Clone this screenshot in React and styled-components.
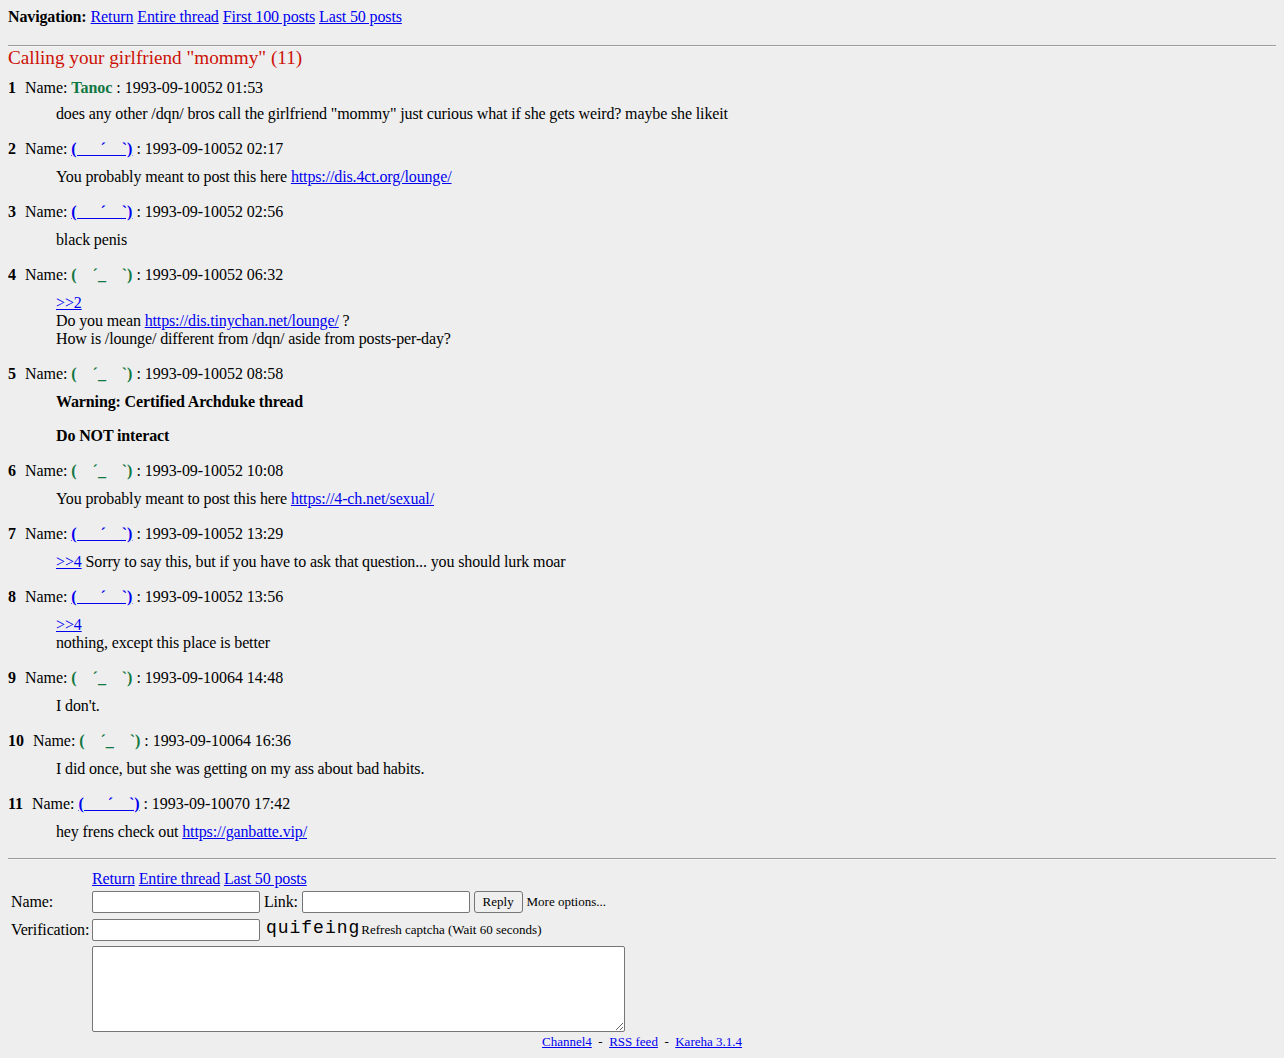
import React from "react";
import styled, { createGlobalStyle } from "styled-components";

const GlobalStyle = createGlobalStyle`
  body {
    margin: 8px;
    background: #eeeeee;
    color: #000;
    font-family: "Liberation Serif", "Times New Roman", serif;
    font-size: 16px;
    letter-spacing: -0.13px;
  }
  a {
    color: #0000ee;
  }
`;

const GREEN_FACE = "(\u2003´_\u2003`)";
const BLUE_FACE = "(\u2003\u2002´\u2003`)";

const NavBar = styled.div`
  line-height: 18px;
  a {
    margin-left: 4px;
  }
`;

const NavLabel = styled.b`
  font-weight: bold;
`;

const Rule = styled.hr`
  border: 0;
  border-top: 1px solid #9c9c9c;
  border-bottom: 1px solid #f6f6f6;
  height: 0;
  margin: ${(p) => p.$top}px 0 ${(p) => p.$bottom}px;
`;

const Title = styled.h2`
  margin: 0;
  font-size: 19.2px;
  line-height: 22px;
  font-weight: normal;
  letter-spacing: 0;
  color: #cc1105;
`;

const PostList = styled.div`
  margin-top: 10px;
`;

const Post = styled.div`
  line-height: 18px;
`;

const PostHead = styled.div`
  height: 18px;
  line-height: 18px;
  letter-spacing: -0.04px;
`;

const ReplyNum = styled.b`
  margin-right: 5px;
`;

const PosterName = styled.b`
  color: #117743;
`;

const PosterLink = styled.a`
  font-weight: bold;
  color: #0000ee;
`;

const PostBody = styled.div`
  margin: ${(p) => (p.$first ? 8 : 10)}px 0 17px 48px;
  line-height: 18px;
`;

const Para = styled.p`
  margin: 0;
  & + & {
    margin-top: 16px;
  }
`;

const FormGrid = styled.div`
  display: grid;
  grid-template-columns: 84px auto;
  grid-template-rows: 17px 24px 23px auto;
  row-gap: 4px;
  align-items: start;
`;

const Label = styled.div`
  padding-left: 3px;
  line-height: 22px;
`;

const Cell = styled.div`
  line-height: 22px;
  white-space: nowrap;
`;

const LinksCell = styled.div`
  grid-column: 2;
  line-height: 18px;
`;

const Field = styled.input`
  box-sizing: border-box;
  width: 168px;
  height: 22px;
  border: 1px solid #767676;
  border-radius: 2px;
  background: #fff;
  vertical-align: top;
  padding: 1px 2px;
  font-size: 13px;
`;

const InlineText = styled.span`
  display: inline-block;
  vertical-align: top;
  line-height: 22px;
`;

const ReplyButton = styled.button`
  box-sizing: border-box;
  height: 22px;
  width: 49px;
  padding: 0;
  font-family: "Liberation Serif", "Times New Roman", serif;
  font-size: 13px;
  color: #000;
  background: #efefef;
  border: 1px solid #767676;
  border-radius: 3px;
  vertical-align: top;
`;

const SmallText = styled.span`
  font-size: 13px;
  vertical-align: top;
  line-height: 22px;
  letter-spacing: 0;
`;

const Captcha = styled.span`
  display: inline-block;
  vertical-align: top;
  font-family: "Liberation Mono", "DejaVu Sans Mono", monospace;
  font-size: 18px;
  letter-spacing: 1px;
  line-height: 18px;
  margin: 0 1px 0 2px;
`;

const Comment = styled.textarea`
  display: block;
  box-sizing: border-box;
  width: 533px;
  height: 86px;
  border: 1px solid #767676;
  border-radius: 2px;
  background: #fff;
`;

const Footer = styled.div`
  margin-top: 2px;
  text-align: center;
  font-size: 13px;
  line-height: 15px;
  letter-spacing: 0;
  white-space: pre;
`;

const posts = [
  {
    num: 1,
    name: "Tanoc",
    date: "1993-09-10052 01:53",
    body: (
      <Para>
        does any other /dqn/ bros call the girlfriend "mommy" just curious what if she gets weird? maybe she likeit
      </Para>
    ),
  },
  {
    num: 2,
    name: BLUE_FACE,
    link: true,
    date: "1993-09-10052 02:17",
    body: (
      <Para>
        You probably meant to post this here <a href="#">https://dis.4ct.org/lounge/</a>
      </Para>
    ),
  },
  { num: 3, name: BLUE_FACE, link: true, date: "1993-09-10052 02:56", body: <Para>black penis</Para> },
  {
    num: 4,
    name: GREEN_FACE,
    date: "1993-09-10052 06:32",
    body: (
      <Para>
        <a href="#">&gt;&gt;2</a>
        <br />
        Do you mean <a href="#">https://dis.tinychan.net/lounge/</a> ?
        <br />
        How is /lounge/ different from /dqn/ aside from posts-per-day?
      </Para>
    ),
  },
  {
    num: 5,
    name: GREEN_FACE,
    date: "1993-09-10052 08:58",
    body: (
      <>
        <Para>
          <b>Warning: Certified Archduke thread</b>
        </Para>
        <Para>
          <b>Do NOT interact</b>
        </Para>
      </>
    ),
  },
  {
    num: 6,
    name: GREEN_FACE,
    date: "1993-09-10052 10:08",
    body: (
      <Para>
        You probably meant to post this here <a href="#">https://4-ch.net/sexual/</a>
      </Para>
    ),
  },
  {
    num: 7,
    name: BLUE_FACE,
    link: true,
    date: "1993-09-10052 13:29",
    body: (
      <Para>
        <a href="#">&gt;&gt;4</a> Sorry to say this, but if you have to ask that question... you should lurk moar
      </Para>
    ),
  },
  {
    num: 8,
    name: BLUE_FACE,
    link: true,
    date: "1993-09-10052 13:56",
    body: (
      <Para>
        <a href="#">&gt;&gt;4</a>
        <br />
        nothing, except this place is better
      </Para>
    ),
  },
  { num: 9, name: GREEN_FACE, date: "1993-09-10064 14:48", body: <Para>I don't.</Para> },
  {
    num: 10,
    name: GREEN_FACE,
    date: "1993-09-10064 16:36",
    body: <Para>I did once, but she was getting on my ass about bad habits.</Para>,
  },
  {
    num: 11,
    name: BLUE_FACE,
    link: true,
    date: "1993-09-10070 17:42",
    body: (
      <Para>
        hey frens check out <a href="#">https://ganbatte.vip/</a>
      </Para>
    ),
  },
];

const App = () => {
  return (
    <>
      <GlobalStyle />
      <NavBar>
        <NavLabel>Navigation:</NavLabel>
        <a href="#">Return</a>
        <a href="#">Entire thread</a>
        <a href="#">First 100 posts</a>
        <a href="#">Last 50 posts</a>
      </NavBar>
      <Rule $top={19} $bottom={0} />
      <Title>Calling your girlfriend "mommy" (11)</Title>

      <PostList>
        {posts.map((post) => (
          <Post key={post.num}>
            <PostHead>
              <ReplyNum>{post.num}</ReplyNum> Name:{" "}
              {post.link ? (
                <PosterLink href="#">{post.name}</PosterLink>
              ) : (
                <PosterName>{post.name}</PosterName>
              )}{" "}
              : {post.date}
            </PostHead>
            <PostBody $first={post.num === 1}>{post.body}</PostBody>
          </Post>
        ))}
      </PostList>

      <Rule $top={0} $bottom={10} />

      <FormGrid>
        <LinksCell>
          <a href="#">Return</a> <a href="#">Entire thread</a> <a href="#">Last 50 posts</a>
        </LinksCell>

        <Label>Name:</Label>
        <Cell>
          <Field type="text" /> <InlineText>Link:</InlineText> <Field type="text" />{" "}
          <ReplyButton>Reply</ReplyButton> <SmallText>More options...</SmallText>
        </Cell>

        <Label>Verification:</Label>
        <Cell>
          <Field type="text" /> <Captcha>quifeing</Captcha>
          <SmallText>Refresh captcha (Wait 60 seconds)</SmallText>
        </Cell>

        <div />
        <Cell>
          <Comment />
        </Cell>
      </FormGrid>

      <Footer>
        <a href="#">Channel4</a>{"  -  "}<a href="#">RSS feed</a>{"  -  "}<a href="#">Kareha 3.1.4</a>
      </Footer>
    </>
  );
};

export default App;
